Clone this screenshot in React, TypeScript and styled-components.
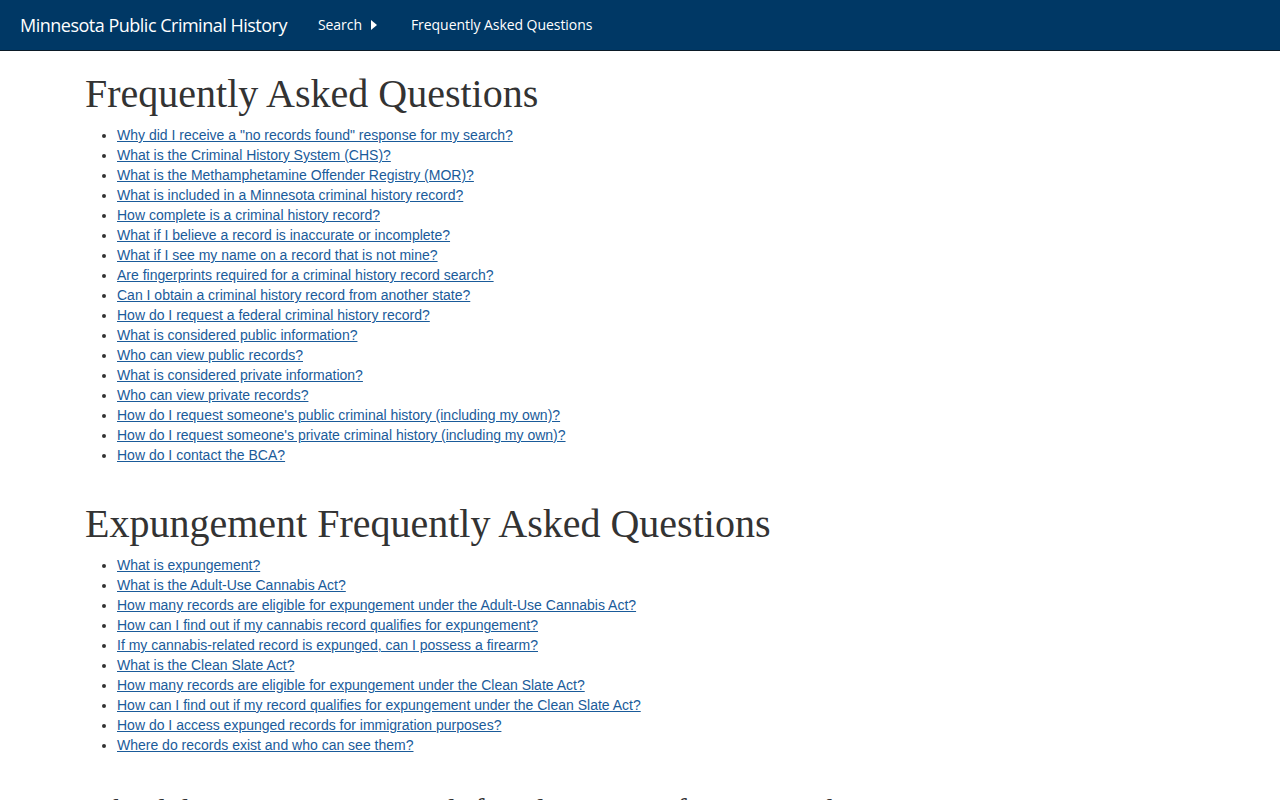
import React from "react";
import styled, { createGlobalStyle } from "styled-components";

const Global = createGlobalStyle`
  html, body { margin: 0; padding: 0; background: #fff; }
  body {
    font-family: "Liberation Sans", Arial, sans-serif;
    font-size: 14px;
    line-height: 20px;
    color: #333;
  }
`;

const NavBar = styled.nav`
  height: 50px;
  background: #003865;
  border-bottom: 1px solid #0b1a26;
  display: flex;
  align-items: center;
  padding-left: 20px;
  font-family: "Open Sans", "Noto Sans", sans-serif;
  color: #fff;
`;

const Brand = styled.a`
  font-size: 18px;
  letter-spacing: -0.5px;
  color: #fff;
  text-decoration: none;
  margin-right: 31px;
`;

const NavLink = styled.a`
  font-size: 14px;
  letter-spacing: -0.05px;
  color: #fff;
  text-decoration: none;
  display: flex;
  align-items: center;
  gap: 9px;
  margin-right: 34px;
`;

const Caret = styled.svg`
  width: 6px;
  height: 10px;
`;

const Main = styled.main`
  padding: 0 85px;
`;

const Section = styled.section`
  & + & { margin-top: 16px; }
`;

const Heading = styled.h1<{ $size?: number }>`
  font-family: "Liberation Serif", "Times New Roman", serif;
  font-weight: 400;
  font-size: ${(p) => p.$size ?? 40}px;
  line-height: 1.1;
  color: #333;
  margin: 0 0 9px;
  padding-top: 21px;
  white-space: nowrap;
`;

const List = styled.ul`
  margin: 0;
  padding-left: 32px;
  list-style: disc;
`;

const Item = styled.li`
  line-height: 20px;
`;

const Link = styled.a`
  color: #1a5b9a;
  text-decoration: underline;
`;

const faq = [
  'Why did I receive a "no records found" response for my search?',
  "What is the Criminal History System (CHS)?",
  "What is the Methamphetamine Offender Registry (MOR)?",
  "What is included in a Minnesota criminal history record?",
  "How complete is a criminal history record?",
  "What if I believe a record is inaccurate or incomplete?",
  "What if I see my name on a record that is not mine?",
  "Are fingerprints required for a criminal history record search?",
  "Can I obtain a criminal history record from another state?",
  "How do I request a federal criminal history record?",
  "What is considered public information?",
  "Who can view public records?",
  "What is considered private information?",
  "Who can view private records?",
  "How do I request someone's public criminal history (including my own)?",
  "How do I request someone's private criminal history (including my own)?",
  "How do I contact the BCA?",
];

const expunge = [
  "What is expungement?",
  "What is the Adult-Use Cannabis Act?",
  "How many records are eligible for expungement under the Adult-Use Cannabis Act?",
  "How can I find out if my cannabis record qualifies for expungement?",
  "If my cannabis-related record is expunged, can I possess a firearm?",
  "What is the Clean Slate Act?",
  "How many records are eligible for expungement under the Clean Slate Act?",
  "How can I find out if my record qualifies for expungement under the Clean Slate Act?",
  "How do I access expunged records for immigration purposes?",
  "Where do records exist and who can see them?",
];

export default function App() {
  return (
    <>
      <Global />
      <NavBar>
        <Brand href="#">Minnesota Public Criminal History</Brand>
        <NavLink href="#">
          Search
          <Caret viewBox="0 0 6 10">
            <path d="M0 0 L6 5 L0 10 Z" fill="#fff" />
          </Caret>
        </NavLink>
        <NavLink href="#">Frequently Asked Questions</NavLink>
      </NavBar>
      <Main>
        <Section>
          <Heading>Frequently Asked Questions</Heading>
          <List>
            {faq.map((q) => (
              <Item key={q}>
                <Link href="#">{q}</Link>
              </Item>
            ))}
          </List>
        </Section>
        <Section>
          <Heading>Expungement Frequently Asked Questions</Heading>
          <List>
            {expunge.map((q) => (
              <Item key={q}>
                <Link href="#">{q}</Link>
              </Item>
            ))}
          </List>
        </Section>
        <Section>
          <Heading as="h2" $size={30}>
            Why did I receive a "no records found" response for my search?
          </Heading>
        </Section>
      </Main>
    </>
  );
}
